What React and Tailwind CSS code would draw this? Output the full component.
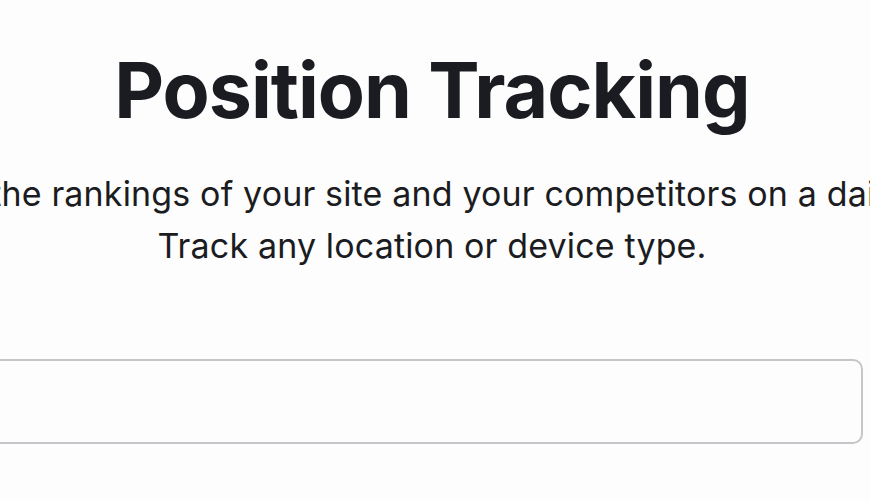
export default function App() {
  return (
    <div className="w-[870px] h-[501px] overflow-hidden bg-[#fdfdfe] text-[#1b1c21]" style={{ fontFamily: "Inter, 'Noto Sans', sans-serif" }}>
      <div className="w-[864px] flex flex-col items-center pt-[42px]">
        <h1 className="text-[77px] font-bold leading-[96px] tracking-[-1px] whitespace-nowrap">Position Tracking</h1>
        <p className="mt-[30px] text-[34px] leading-[52px] tracking-[0.15px] whitespace-nowrap text-center font-normal">
          Monitor the rankings of your site and your competitors on a daily basis.
        </p>
        <p className="text-[34px] leading-[52px] tracking-[0.15px] whitespace-nowrap text-center font-normal">
          Track any location or device type.
        </p>
      </div>
      <div className="w-[870px] flex justify-end pr-[7px] mt-[87px]">
        <div className="w-[1000px] shrink-0 h-[85px] border-2 border-[#c6c6ca] rounded-[10px] bg-[#fdfdfe]" />
      </div>
    </div>
  );
}
